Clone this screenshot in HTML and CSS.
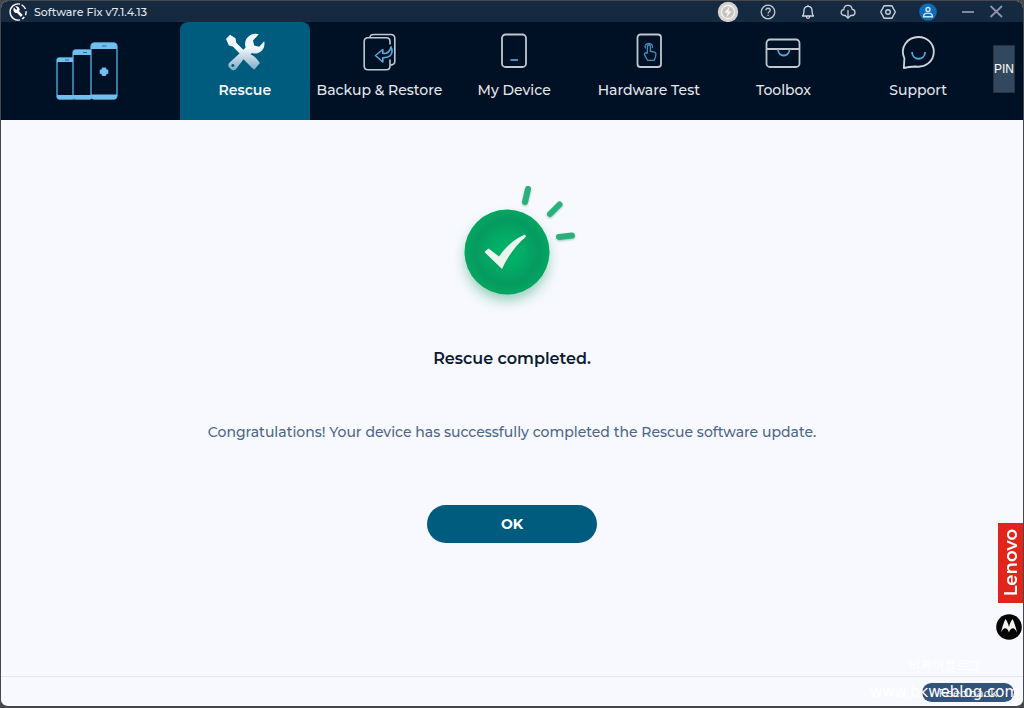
FILE: index.html
```html
<!DOCTYPE html>
<html lang="en">
<head>
<meta charset="utf-8">
<meta name="viewport" content="width=device-width, initial-scale=1">
<title>Software Fix</title>
<link rel="stylesheet" href="styles.css">
</head>
<body>
<div class="window">
  <header class="titlebar">
    <svg class="app-icon" viewBox="0 0 18 18" fill="none" stroke="#fff" aria-hidden="true">
      <path d="M11 16.9A8.1 8.1 0 1 1 11 1.1" stroke-width="1.4"/>
      <path d="M12.6 1.8A8.1 8.1 0 0 1 16.5 6M17 8.2a8 8 0 0 1-.5 4M15.3 14a8 8 0 0 1-2.4 2" stroke-width="1.4"/>
      <path d="M8.6 8.6l4.2 4.4" stroke-width="2.6"/>
      <path d="M5 4.6l2 2.2.9-.3.3-.9-2-2.1c2.300-.6 4.600 1 4.400 3.400-.2 2.300-2.500 3.600-4.600 2.800C4.300 9 3.900 6.600 5 4.600z" fill="#fff" stroke="none"/>
    </svg>
    <span class="app-name">Software Fix v7.1.4.13</span>
    <div class="tools">
      <button class="tool" aria-label="Quick action">
        <svg viewBox="0 0 22 22"><circle cx="11" cy="11" r="10.200" fill="#d5d3d2"/><circle cx="11" cy="11" r="6.500" fill="#c5c3c2" stroke="#f4f3f2" stroke-width="1.300"/><path d="M12.600 5.500L7.600 11.800h3l-1.200 4.700 5-6.300h-3z" fill="#f7f7f7"/></svg>
      </button>
      <button class="tool" aria-label="Help">
        <svg viewBox="0 0 22 22" fill="none" stroke="#c3cbd6" stroke-width="1.300"><circle cx="11" cy="11" r="6.800"/><path d="M8.900 9.300c0-2.800 4.300-2.700 4.300 0 0 1.500-2.100 1.600-2.100 3.200M11.100 13.700v1.300"/></svg>
      </button>
      <button class="tool" aria-label="Notifications">
        <svg viewBox="0 0 22 22" fill="none" stroke="#d3d9e0" stroke-width="1.300" stroke-linejoin="round"><path d="M5.500 15c1.300-1.500 1.500-2.700 1.500-5.500 0-2.700 1.600-4.200 4-4.200s4 1.500 4 4.200c0 2.800.2 4 1.500 5.500zM11 5.300V4M9.300 15.500c.3 2.500 3.100 2.500 3.400 0"/></svg>
      </button>
      <button class="tool" aria-label="Downloads">
        <svg viewBox="0 0 22 22" fill="none" stroke="#c9d0da" stroke-width="1.300" stroke-linecap="round"><path d="M8.500 14.500H7.300c-4.200-.3-4-5.500-.6-5.900C7.300 3.200 14.300 3 15.200 8.400c3.800.2 3.700 5.800-.2 6.100h-1.500M11 9.500v7.600M8.800 15l2.200 2.200 2.200-2.200"/></svg>
      </button>
      <button class="tool" aria-label="Settings">
        <svg viewBox="0 0 22 22" fill="none" stroke="#c9d0da" stroke-width="1.400" stroke-linejoin="round"><path d="M7.200 4.700h7.600l3.500 6.300-3.500 6.300H7.200L3.700 11z"/><circle cx="11" cy="11" r="2.300"/></svg>
      </button>
      <button class="tool" aria-label="Account">
        <svg viewBox="0 0 22 22" fill="none" stroke="#cfe5f7" stroke-width="1.400"><circle cx="11" cy="11" r="8.800" fill="#0d6cb5" stroke="none"/><circle cx="11" cy="8.500" r="2"/><path d="M6.500 15.700c0-4.800 9-4.800 9 0z"/></svg>
      </button>
      <button class="tool" aria-label="Minimize">
        <svg viewBox="0 0 22 22" stroke="#8f93ab" stroke-width="1.800"><path d="M5 11h12"/></svg>
      </button>
      <button class="tool last" aria-label="Close">
        <svg viewBox="0 0 22 22" stroke="#8f93ab" stroke-width="1.800"><path d="M5.500 5l11.500 11M17 5L5.500 16"/></svg>
      </button>
    </div>
  </header>

  <div class="banner">
    <svg class="logo" viewBox="0 0 62 58" aria-label="Devices">
      <g fill="#001025" stroke="#5eafe0" stroke-width="1.300">
        <rect x="1" y="16" width="18" height="41" rx="2.500"/>
        <rect x="17" y="8" width="19" height="49" rx="3"/>
        <rect x="35" y="1" width="26" height="56" rx="3.500"/>
      </g>
      <g fill="#6fc0ef">
        <path d="M1 20v-1.500a2.500 2.500 0 0 1 2.500-2.500H17v4zM1 53h16v4H3.500A2.500 2.500 0 0 1 1 54.500zM17 13v-2a3 3 0 0 1 3-3h15v5zM17 53h18v4H20a3 3 0 0 1-3-3zM35 7V4.500A3.500 3.500 0 0 1 38.500 1h19A3.500 3.500 0 0 1 61 4.500V7zM35 52.500h26v1a3.500 3.500 0 0 1-3.500 3.500h-19a3.500 3.500 0 0 1-3.500-3.500z"/>
        <path d="M46.300 25.500h3.400l.8 1.800 1.800.8v3.400l-1.800.8-.8 1.800h-3.400l-.8-1.800-1.800-.8v-3.400l1.800-.8z"/>
      </g>
      <path d="M46 4h4.500M27 10.500h4M9 18h4" stroke="#2d6d96" stroke-width="1.200"/>
    </svg>
    <nav class="tabs">
      <button class="tab active">
        <svg viewBox="0 0 40 40" aria-hidden="true">
          <defs><linearGradient id="steel" x1="0" y1="0" x2="0" y2="1"><stop offset="0.4" stop-color="#f2f7fa"/><stop offset="1" stop-color="#7fa9c7"/></linearGradient></defs>
          <path fill="url(#steel)" fill-rule="evenodd" d="M1 6l4-4.200 5.500 3.400.8 4.500 7 7 2.300-2.300C19 9.500 21 4.500 25.500 2c3-1.600 6-1.500 8.300-.7L28 7.500l1.200 5 5 1.200 5-5.500c1 4-.4 7.800-3 10-3 2.500-6.500 2.700-9.300 1.700l-1.500 1.500c4.500 1.300 7 5.200 9.500 8.600l-5.500 6.400c-1.300-.2-2.200-1.200-3.300-2.400l-7.600-7.700-7 9.300c-1.300 1.800-3.500 2.200-5.200.8l-2-2c-1.500-1.500-1.200-3.600.4-5L14.500 20.500l-6.600-7-4-1zM7.800 31a1.500 1.500 0 1 0 .1 0z"/>
        </svg>
        <span>Rescue</span>
      </button>
      <button class="tab">
        <svg viewBox="0 0 40 40" fill="none" stroke="#c1c7cf" stroke-width="1.600" aria-hidden="true">
          <path d="M31 26.500V33c0 2.600-1 3.800-3.600 3.800H9c-2.500 0-3.800-1.200-3.800-3.800V8.500C5.200 6 6.500 4.800 9 4.800h18.400C30 4.800 31 6 31 8.500v3"/>
          <path d="M11 4.500C11 2.500 12.500 1.500 14.500 1.500h17.300c2.700 0 4 1.300 4 4v22.700c0 2.400-1.200 3.700-4.400 3.900"/>
          <path d="M32 13.800c2.500 5.500.6 11-8.200 11v4.200l-7.300-6.500 7.300-6v4c4.800 0 7.500-2 8.200-6.700z" stroke="#58a9dc" stroke-linejoin="round"/>
        </svg>
        <span>Backup &amp; Restore</span>
      </button>
      <button class="tab">
        <svg viewBox="0 0 40 40" fill="none" stroke="#c1c7cf" stroke-width="1.800" aria-hidden="true">
          <rect x="8" y="1.500" width="24" height="32.500" rx="3.500"/><path d="M16.500 27h7.500" stroke="#438ebb" stroke-width="2"/>
        </svg>
        <span>My Device</span>
      </button>
      <button class="tab">
        <svg viewBox="0 0 40 40" fill="none" stroke="#c1c7cf" stroke-width="1.800" aria-hidden="true">
          <rect x="8.500" y="1.500" width="23.500" height="32.500" rx="3"/>
          <path d="M18.400 20v-6.500c0-2 3-2 3 0v4.700l4 .9c1 .3 1.600 1 1.500 2-.1 3-.4 4-1.700 6.200h-6.500c-1.500-2.300-2.600-3.400-3.300-6.300 0-1.500 1.400-1.700 3-.2M16.600 15.500c-1.600-3 .6-5 3.200-5s4.600 2 3.300 4.600" stroke="#438ebb" stroke-width="1.300"/>
        </svg>
        <span>Hardware Test</span>
      </button>
      <button class="tab">
        <svg viewBox="0 0 40 40" fill="none" stroke="#c1c7cf" stroke-width="1.800" aria-hidden="true">
          <rect x="3.500" y="6.500" width="33" height="27.500" rx="3.500"/><path d="M3.500 16h33"/><path d="M15 16.500c.3 8 11.200 8 11.500 0" stroke="#58a9dc"/>
        </svg>
        <span>Toolbox</span>
      </button>
      <button class="tab">
        <svg viewBox="0 0 40 40" fill="none" stroke="#d0d5dc" stroke-width="1.800" stroke-linejoin="round" aria-hidden="true">
          <path d="M5.800 35l.6-9.500C1.500 14 9.500 4 20.500 4c9 0 15.300 7 15.300 14.800 0 9.700-8.800 16.300-18.200 14.700-4 .2-8 .6-11.800 1.500z"/><path d="M14 19c.3 9 12.800 9 13.100 0" stroke="#58a9dc"/>
        </svg>
        <span>Support</span>
      </button>
    </nav>
    <button class="pin">PIN</button>
  </div>

  <main class="content">
    <svg class="success" viewBox="0 0 150 150" role="img" aria-label="Success">
      <defs>
        <radialGradient id="disc"><stop offset="0" stop-color="#02b569"/><stop offset="0.350" stop-color="#03ad66"/><stop offset="0.750" stop-color="#059a60"/><stop offset="1" stop-color="#04a661"/></radialGradient>
        <filter id="glow" x="-40%" y="-40%" width="180%" height="180%"><feGaussianBlur stdDeviation="7"/></filter>
        <filter id="soft" x="-30%" y="-30%" width="160%" height="160%"><feDropShadow dx="0" dy="1" stdDeviation="1" flood-color="#087c50" flood-opacity="0.400"/></filter>
      </defs>
      <circle cx="67" cy="89" r="41" fill="#269b6c" opacity="0.500" filter="url(#glow)"/>
      <circle cx="67" cy="82" r="42.500" fill="url(#disc)"/>
      <path d="M44.500 82l4-3.500 10.500 8C65 78 74 69 85 64.500l1 2C76 75 68 86 62 99z" fill="#eaf5ef" filter="url(#soft)"/>
      <path d="M88 19l-3 13M119.500 34.500L110 44M132 65.500l-13 1.500" stroke="#2bb07a" stroke-width="6" stroke-linecap="round" filter="url(#soft)"/>
    </svg>
    <h1 class="heading">Rescue completed.</h1>
    <p class="message">Congratulations! Your device has successfully completed the Rescue software update.</p>
    <button class="ok">OK</button>
    <aside class="brands">
      <div class="lenovo"><span>Lenovo</span></div>
      <svg class="moto" viewBox="0 0 26 26" role="img" aria-label="Motorola"><circle cx="13" cy="13" r="12.800" fill="#050505"/><path d="M5 18.500C6 14 7.500 8.500 9.500 5c1.700 2.200 2.800 5 3.500 8 .7-3 1.800-5.800 3.500-8 2 3.500 3.500 9 4.500 13.500-1.200-2.600-2.600-4.200-4-4.200-2 0-3.300 1.800-4 4.200-.7-2.400-2-4.200-4-4.200-1.400 0-2.800 1.600-4 4.200z" fill="#f3f3f3"/></svg>
    </aside>
  </main>

  <footer class="footer">
    <button class="feedback">Feedback</button>
    <div class="watermark" lang="ko"><span class="mark-name">비케이블로그</span><span class="mark-url">www.bkweblog.com</span></div>
  </footer>
</div>
</body>
</html>
```
FILE: styles.css
```css
* {
  box-sizing: border-box;
}

body {
  margin: 0;
  background: #47484c;
  font-family: Montserrat, Inter, "Liberation Sans", sans-serif;
}

button {
  border: 0;
  padding: 0;
  background: none;
  color: inherit;
  font: inherit;
  cursor: pointer;
}

.window {
  display: flex;
  flex-direction: column;
  min-height: 100vh;
  border: 1px solid #47484c;
  border-bottom-width: 2px;
  border-radius: 8px;
  background: #f8f9fe;
}

.titlebar {
  display: flex;
  align-items: center;
  height: 21px;
  padding: 0 16px 0 8px;
  border-radius: 7px 7px 0 0;
  background: #152941;
  color: #e2e6ec;
}

.app-icon {
  width: 18px;
  height: 18px;
}

.app-name {
  margin-left: 7px;
  font-size: 11px;
  font-weight: 500;
  line-height: 20px;
}

.tools {
  display: flex;
  gap: 18px;
  margin-left: auto;
}

.tool {
  display: flex;
  width: 22px;
  height: 22px;
}

.tool svg {
  width: 22px;
  height: 22px;
}

.tool.last {
  margin-left: -12px;
}

.banner {
  display: grid;
  grid-template-columns: 179px 1fr 40px;
  height: 98px;
  background: #001025;
  color: #e3e7ec;
}

.logo {
  width: 62px;
  height: 58px;
  margin: 20px 0 0 55px;
}

.tabs {
  display: grid;
  grid-template-columns: repeat(6, minmax(0, 1fr));
  gap: 5px;
}

.tab {
  display: flex;
  flex-direction: column;
  align-items: center;
  gap: 8px;
  padding-top: 11px;
  border-radius: 8px 8px 0 0;
  font-size: 14px;
  font-weight: 500;
  line-height: 18px;
  white-space: nowrap;
}

.tab svg {
  width: 40px;
  height: 40px;
}

.tab.active {
  background: #005c7f;
  color: #f3f8fa;
  font-weight: 600;
}

.pin {
  width: 22px;
  height: 48px;
  margin: 23px 0 0 10px;
  border: 1px solid #28333e;
  background: #32485e;
  color: #fff;
  font-family: "Liberation Sans", sans-serif;
  font-size: 12px;
}

.content {
  position: relative;
  display: flex;
  flex: 1;
  flex-direction: column;
  align-items: center;
  padding-top: 50px;
}

.success {
  width: 150px;
  height: 150px;
  margin-left: 6px;
}

.heading {
  margin: 28px 0 0;
  color: #0c1b31;
  font-size: 16px;
  font-weight: 600;
  line-height: 22px;
}

.message {
  margin: 51px 0 0;
  color: #4c6788;
  font-size: 14px;
  font-weight: 500;
  line-height: 22px;
}

.ok {
  width: 170px;
  height: 38px;
  margin-top: 62px;
  border-radius: 19px;
  background: #005c7f;
  color: #fff;
  font-size: 14px;
  font-weight: 700;
}

.brands {
  position: absolute;
  right: 0;
  bottom: 36px;
  display: flex;
  flex-direction: column;
  align-items: flex-end;
  gap: 11px;
}

.lenovo {
  display: flex;
  align-items: center;
  justify-content: center;
  width: 25px;
  height: 80px;
  background: #e1251b;
  color: #fff;
  font-size: 18px;
  font-weight: 600;
}

.lenovo span {
  writing-mode: vertical-rl;
  transform: rotate(180deg);
  line-height: 24px;
}

.moto {
  width: 26px;
  height: 26px;
  margin-right: 1px;
}

.footer {
  position: relative;
  display: flex;
  align-items: center;
  justify-content: flex-end;
  height: 30px;
  padding: 2px 9px 0 0;
  border-top: 1px solid #e1e7ec;
}

.feedback {
  width: 92px;
  height: 19px;
  border-radius: 10px;
  background: #34537a;
  color: #fff;
  font-size: 12px;
  line-height: 18px;
}

.watermark {
  position: absolute;
  right: 4px;
  bottom: 4px;
  display: flex;
  flex-direction: column;
  align-items: center;
  gap: 6px;
  color: #fff;
  font-family: "DejaVu Sans", "Noto Sans CJK KR", sans-serif;
  font-size: 15px;
  line-height: 20px;
  pointer-events: none;
}

.mark-name {
  font-size: 13px;
}
```
